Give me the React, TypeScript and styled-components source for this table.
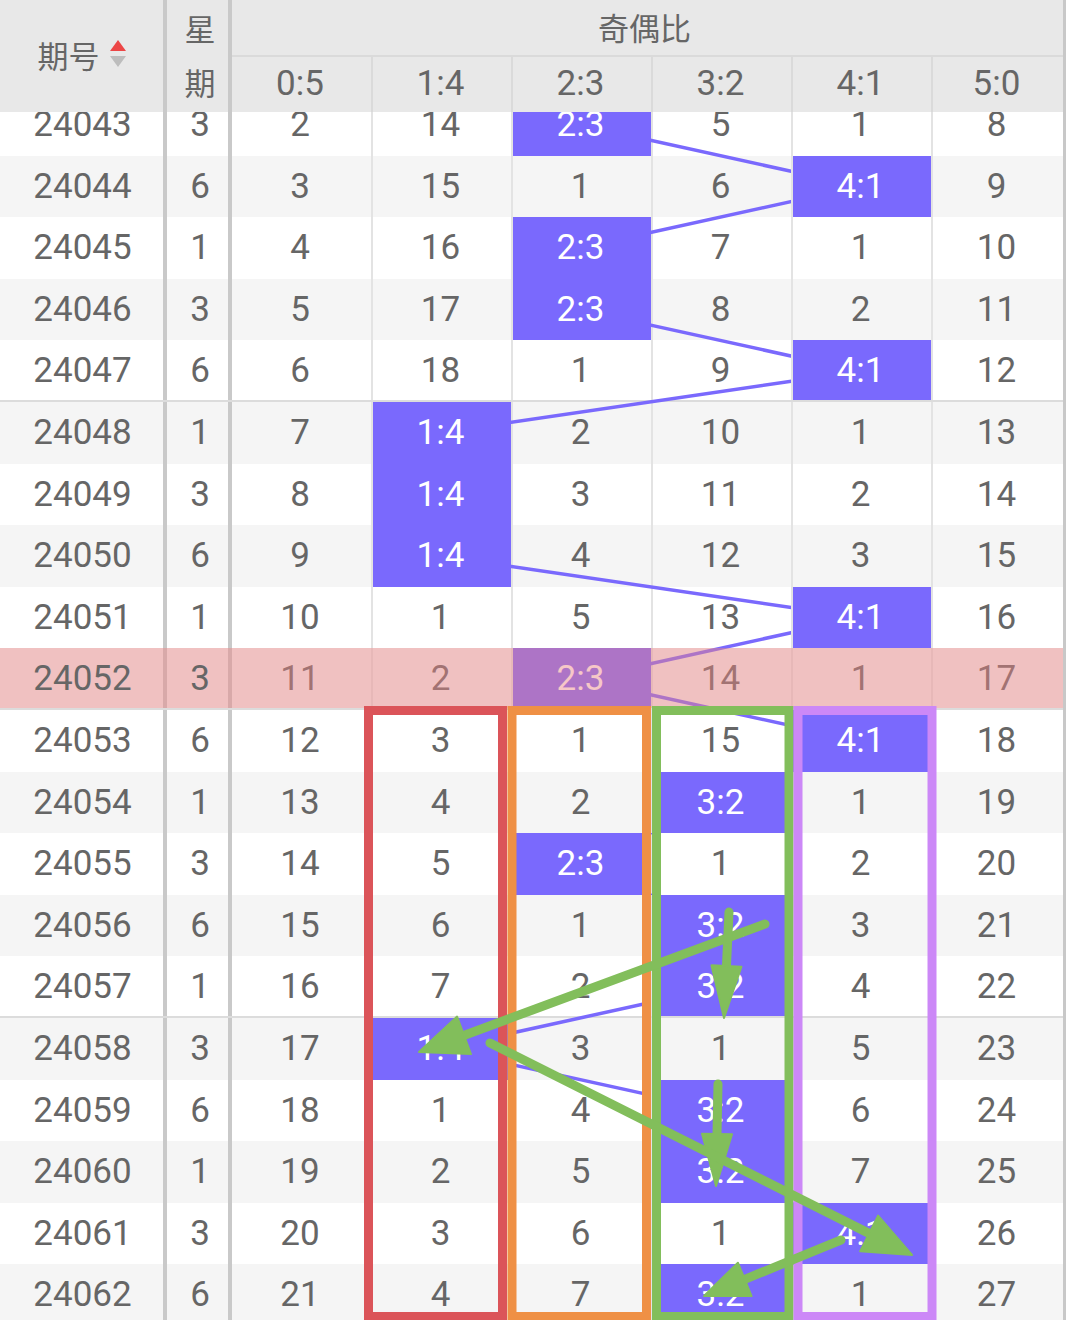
import React from 'react';
import styled, { createGlobalStyle, css } from 'styled-components';

const GlobalStyle = createGlobalStyle`
  html, body {
    margin: 0;
    padding: 0;
    background: #fff;
  }
  body {
    font-family: Roboto, "Noto Sans CJK SC", sans-serif;
    color: #666;
  }
`;

const COLS = ['0:5', '1:4', '2:3', '3:2', '4:1', '5:0'];
const START_MISS = [1, 13, 0, 4, 0, 7];
const HITS = [2, 4, 2, 2, 4, 1, 1, 1, 4, 2, 4, 3, 2, 3, 3, 1, 3, 3, 4, 3];
const WEEKS = [3, 6, 1];
const ROW_H = 61.6;
const CENTERS = [300, 440, 580, 720, 860, 996];
const GRID = '167px 65px 139px repeat(4, 140px) 132px';

const PURPLE = '#7a69fd';
const GREEN = '#82be5b';

type RowData = {
  period: number;
  week: number;
  cells: (string | number)[];
  hit: number;
  groupEnd: boolean;
  marked: boolean;
};

const buildRows = (): RowData[] => {
  const miss = [...START_MISS];
  return HITS.map((hit, i) => {
    const cells = COLS.map((label, c) => {
      if (c === hit) {
        miss[c] = 0;
        return label;
      }
      miss[c] += 1;
      return miss[c];
    });
    const period = 24043 + i;
    return {
      period,
      week: WEEKS[i % 3],
      cells,
      hit,
      groupEnd: (period - 24042) % 5 === 0,
      marked: period === 24052,
    };
  });
};

const SortIcon = () => (
  <svg width='16' height='30' viewBox='0 0 16 30'>
    <path d='M8 1 L16 12 L0 12 Z' fill='#ec4646' />
    <path d='M0 17 L16 17 L8 28 Z' fill='#bdbdbd' />
  </svg>
);

// green hand-drawn arrows laid over the chart
const Arrow = ({ from, to, head = 48, half = 20 }: { from: number[]; to: number[]; head?: number; half?: number }) => {
  const [x1, y1] = from;
  const [x2, y2] = to;
  const len = Math.hypot(x2 - x1, y2 - y1);
  const ux = (x2 - x1) / len;
  const uy = (y2 - y1) / len;
  const bx = x2 - ux * head;
  const by = y2 - uy * head;
  const px = -uy;
  const py = ux;
  return (
    <g>
      <line x1={x1} y1={y1} x2={bx + ux * 6} y2={by + uy * 6} stroke={GREEN} strokeWidth='9' strokeLinecap='round' />
      <polygon
        points={`${x2},${y2} ${bx + px * half},${by + py * half} ${bx - px * half},${by - py * half}`}
        fill={GREEN}
        stroke={GREEN}
        strokeWidth='2'
        strokeLinejoin='round'
      />
    </g>
  );
};

const App = () => {
  const rows = buildRows();
  const points = rows.map((r, i) => `${CENTERS[r.hit]},${ROW_H * i + ROW_H / 2}`).join(' ');

  return (
    <Page>
      <GlobalStyle />
      <Table>
        <Header>
          <PeriodHead>
            期号
            <SortIcon />
          </PeriodHead>
          <WeekHead>
            <span>星</span>
            <span>期</span>
          </WeekHead>
          <GroupTitle>奇偶比</GroupTitle>
          {COLS.map((c, i) => (
            <RatioHead key={c} $first={i === 0}>
              {c}
            </RatioHead>
          ))}
        </Header>

        <BodyViewport>
          <BodyInner>
            <TrendLine width='1063' height={ROW_H * rows.length}>
              <polyline points={points} fill='none' stroke={PURPLE} strokeWidth='3.5' strokeLinejoin='round' />
            </TrendLine>
            {rows.map((r, i) => (
              <Row key={r.period} $odd={i % 2 === 1} $groupEnd={r.groupEnd} $marked={r.marked}>
                <PeriodCell>{r.marked ? <Lifted>{r.period}</Lifted> : r.period}</PeriodCell>
                <WeekCell>{r.marked ? <Lifted>{r.week}</Lifted> : r.week}</WeekCell>
                {r.cells.map((v, c) => (
                  <RatioCell key={c} $first={c === 0} $hit={c === r.hit}>
                    {v}
                  </RatioCell>
                ))}
              </Row>
            ))}
          </BodyInner>
        </BodyViewport>
      </Table>

      <Marks width='1068' height='1320' viewBox='0 0 1068 1320'>
        <rect x='368.5' y='710.5' width='134' height='606' fill='none' stroke='#db5459' strokeWidth='9' />
        <rect x='512' y='710.5' width='134.5' height='606' fill='none' stroke='#ef9045' strokeWidth='9' />
        <rect x='656.5' y='710.5' width='132.5' height='606' fill='none' stroke={GREEN} strokeWidth='9' />
        <rect x='798' y='710.5' width='134' height='606' fill='none' stroke='#cc88f7' strokeWidth='9' />
        <Arrow from={[765, 924]} to={[419, 1052]} />
        <Arrow from={[729, 912]} to={[724, 1018]} head={52} half={15} />
        <Arrow from={[718, 1084]} to={[716, 1186]} head={52} half={15} />
        <Arrow from={[490, 1043]} to={[912, 1255]} />
        <Arrow from={[841, 1240]} to={[704, 1296]} head={44} half={18} />
      </Marks>
    </Page>
  );
};

const Page = styled.div`
  position: relative;
  width: 1068px;
  height: 1320px;
  overflow: hidden;
  background: #fff;
`;

const Table = styled.div`
  width: 1063px;
  height: 1320px;
  border-right: 3px solid #c8c8c8;
  display: flex;
  flex-direction: column;
`;

const Header = styled.div`
  display: grid;
  grid-template-columns: ${GRID};
  grid-template-rows: 57px 55px;
  height: 112px;
  background: #e8e8e8;
  color: #666;
  flex-shrink: 0;
`;

const PeriodHead = styled.div`
  grid-row: 1 / 3;
  display: flex;
  align-items: center;
  justify-content: center;
  gap: 10px;
  border-right: 4px solid #c9c9c9;
  font-family: "Noto Sans CJK SC", sans-serif;
  font-size: 31px;
  padding-bottom: 4px;
`;

const WeekHead = styled.div`
  grid-row: 1 / 3;
  display: flex;
  flex-direction: column;
  align-items: center;
  justify-content: space-around;
  border-right: 4px solid #c9c9c9;
  font-family: "Noto Sans CJK SC", sans-serif;
  font-size: 31px;
  line-height: 1;
  padding-bottom: 4px;
  padding-left: 5px;
`;

const GroupTitle = styled.div`
  grid-column: 3 / 9;
  display: flex;
  align-items: center;
  justify-content: center;
  border-bottom: 2px solid #dadada;
  font-family: "Noto Sans CJK SC", sans-serif;
  font-size: 31px;
  padding-right: 6px;
  padding-bottom: 3px;
`;

const RatioHead = styled.div<{ $first: boolean }>`
  display: flex;
  align-items: center;
  justify-content: center;
  border-left: ${(p) => (p.$first ? 'none' : '2px solid #dadada')};
  font-size: 35px;
  padding-right: 3px;
  padding-bottom: 2px;
`;

const BodyViewport = styled.div`
  flex: 1;
  overflow: hidden;
  position: relative;
  isolation: isolate;
`;

const BodyInner = styled.div`
  position: relative;
  margin-top: -18px;
`;

const TrendLine = styled.svg`
  position: absolute;
  top: 0;
  left: 0;
  z-index: 1;
  pointer-events: none;
`;

const Row = styled.div<{ $odd: boolean; $groupEnd: boolean; $marked: boolean }>`
  position: relative;
  display: grid;
  grid-template-columns: ${GRID};
  height: ${ROW_H}px;
  box-sizing: border-box;
  background: ${(p) => (p.$odd ? '#f5f5f5' : '#fff')};
  border-bottom: ${(p) => (p.$groupEnd ? '2px solid #dcdcdc' : 'none')};
  font-size: 35px;
  color: #666;

  ${(p) =>
    p.$marked &&
    css`
      &::after {
        content: '';
        position: absolute;
        inset: 0 -3px 0 0;
        background: rgba(235, 130, 130, 0.45);
        z-index: 3;
      }
    `}
`;

const Cell = styled.div`
  display: flex;
  align-items: center;
  justify-content: center;
  box-sizing: border-box;
`;

const PeriodCell = styled(Cell)`
  border-right: 4px solid #c9c9c9;
  padding-left: 2px;
`;

const WeekCell = styled(Cell)`
  border-right: 4px solid #c9c9c9;
  padding-left: 5px;
`;

const Lifted = styled.span`
  position: relative;
  z-index: 4;
`;

const RatioCell = styled(Cell)<{ $first: boolean; $hit: boolean }>`
  border-left: ${(p) => (p.$first ? 'none' : '2px solid #e3e3e3')};
  padding-right: 3px;

  ${(p) =>
    p.$hit &&
    css`
      position: relative;
      z-index: 2;
      background: ${PURPLE};
      background-clip: padding-box;
      color: #fff;
    `}
`;

const Marks = styled.svg`
  position: absolute;
  top: 0;
  left: 0;
  z-index: 10;
  pointer-events: none;
`;

export default App;
